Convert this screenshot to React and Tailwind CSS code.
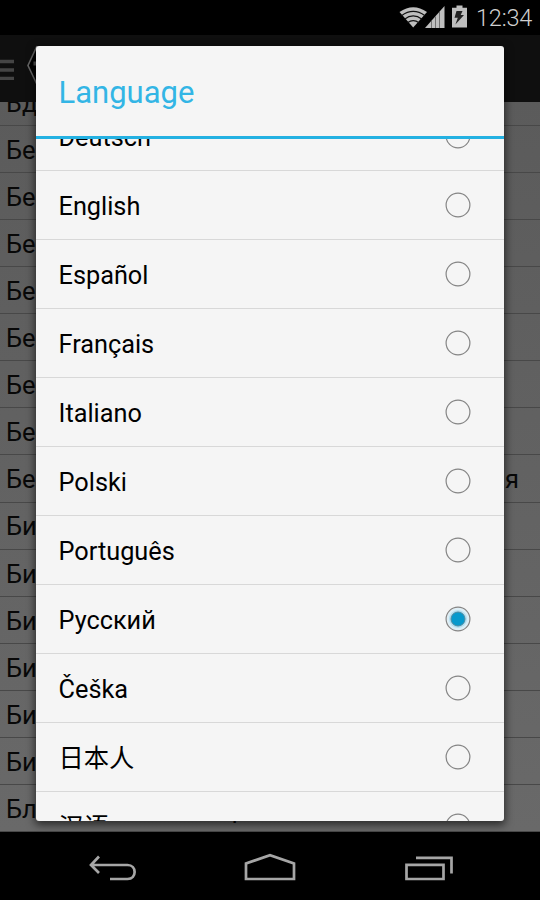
/**
 * App.jsx — language picker dialog over a dimmed list screen
 */

const LANGUAGES = [
  'Deutsch',
  'English',
  'Español',
  'Français',
  'Italiano',
  'Polski',
  'Português',
  'Русский',
  'Češka',
  '日本人',
  '汉语',
];

const SELECTED = 'Русский';

const ENTRIES = [
  'Вд', 'Бе', 'Бе', 'Бе', 'Бе', 'Бе', 'Бе', 'Бе',
  'Бе', 'Би', 'Би', 'Би', 'Би', 'Би', 'Би', 'Бл',
];

function StatusBar() {
  return (
    <header className="flex h-[35px] shrink-0 items-center justify-end bg-black pr-[9px]">
      {/* Wi-Fi, signal and charging battery */}
      <svg width="70" height="35" viewBox="398 0 70 35" fill="none">
        <path d="M413.200 27.500 399.500 12Q413.200 2.500 427 12Z" fill="#bebebe" />
        <path
          d="M401.500 15.700Q413.200 7.200 425 15.700M404.500 19.200Q413.200 12.700 422 19.200M407.500 22.800Q413.200 18.300 419 22.800"
          stroke="#111"
          strokeWidth="1.200"
        />
        <path d="M425 28 444.500 6V28Z" fill="#bebebe" />
        <path d="M431.500 21V28M435.500 16.500V28M439.500 12V28" stroke="#686868" strokeWidth="0.900" />
        <path d="M456.500 5.500h6v2.200h4.500V27.500H452V7.700h4.500Z" fill="#bebebe" />
        <path d="M456.500 11h6l-1.800 4h3.300l-8.600 9.500 2.400-6.800h-3.300Z" fill="#222" />
      </svg>
      <span className="ml-[8px] w-[55px] whitespace-nowrap pt-[2px] text-[23.5px] leading-[33px] font-light tracking-[-0.2px] text-[#d0d0d0]">12:34</span>
    </header>
  );
}

function ActionBar() {
  return (
    <div className="h-[67px] shrink-0 bg-[#0f0f0f]">
      <svg width="60" height="67" viewBox="0 35 60 67" fill="none">
        <path d="M0 61.500h14M0 70h14M0 78.300h14" stroke="#454545" strokeWidth="3.300" />
        <path d="M37 46 28 65.500 37 84.500" fill="#000" stroke="#666" strokeWidth="1.600" />
        <path d="M33.500 63.500H37" stroke="#555" strokeWidth="4" />
      </svg>
    </div>
  );
}

function EntryList() {
  return (
    <ul className="h-[730px] shrink-0 overflow-hidden border-b border-[#484848] bg-linear-to-b from-[#5b5b5b] to-[#696969]">
      {ENTRIES.map((entry, i) => (
        <li
          key={i}
          className="flex h-[47.1px] items-center justify-between border-b border-[#484848] pt-[2px] pr-[21px] pl-[6px] text-[25.5px] text-[#080808] first:-mt-[23.3px]"
        >
          <span>{entry}</span>
          {i === 8 && <span>я</span>}
          {i === 15 && <span className="mr-[273px]">р</span>}
        </li>
      ))}
    </ul>
  );
}

function NavigationBar() {
  return (
    <nav className="h-[68px] shrink-0 bg-black">
      <svg width="540" height="68" viewBox="0 832 540 68" fill="none" stroke="#a6a6a6" strokeWidth="2.700">
        <path d="M99 856.500 91 865 99 873M91 865H127.500C137 865 137 879 127.500 879H110" />
        <path d="M246 879V863.500L270 855.200 294 863.500V879Z" />
        <path d="M406.500 864.800H443.500V879H406.500ZM416 857.800H451.500V873.500" />
      </svg>
    </nav>
  );
}

function Radio({ checked }) {
  return (
    <svg width="26" height="26" viewBox="0 0 26 26" fill="none">
      {checked && (
        <>
          <circle cx="13" cy="13" r="11" fill="#dceef6" />
          <circle cx="13" cy="13" r="9" fill="#b5dff0" />
          <circle cx="13" cy="13" r="7" fill="#0799cc" stroke="#4f8aa0" strokeWidth="1" />
        </>
      )}
      <circle cx="13" cy="13" r="11.900" stroke="#858585" strokeWidth="1.200" />
    </svg>
  );
}

function LanguageDialog() {
  return (
    <section className="absolute top-[46px] left-[36px] flex h-[775px] w-[467.5px] flex-col overflow-hidden rounded-[3px] bg-[#f5f5f5] shadow-[0_3px_8px_1px_rgba(0,0,0,0.6)]">
      <h1 className="flex h-[93px] shrink-0 items-center border-b-[3px] border-[#24b1e2] pt-[4px] pl-[22.5px] text-[31px] text-[#33b5e5]">
        Language
      </h1>
      <ul className="min-h-0 flex-1 overflow-hidden">
        {LANGUAGES.map((language) => (
          <li
            key={language}
            className="flex h-[68.95px] items-center justify-between border-b border-[#d8d8d8] pr-[32.5px] pl-[22.5px] text-[25.3px] text-black first:-mt-[36.7px]"
          >
            <span className="pt-[4px]">{language}</span>
            <Radio checked={language === SELECTED} />
          </li>
        ))}
      </ul>
    </section>
  );
}

export default function App() {
  return (
    <div className="relative flex h-[900px] w-[540px] flex-col overflow-hidden bg-black font-[Roboto,'Noto_Sans_CJK_SC',sans-serif]">
      <StatusBar />
      <ActionBar />
      <EntryList />
      <NavigationBar />
      <LanguageDialog />
    </div>
  );
}
